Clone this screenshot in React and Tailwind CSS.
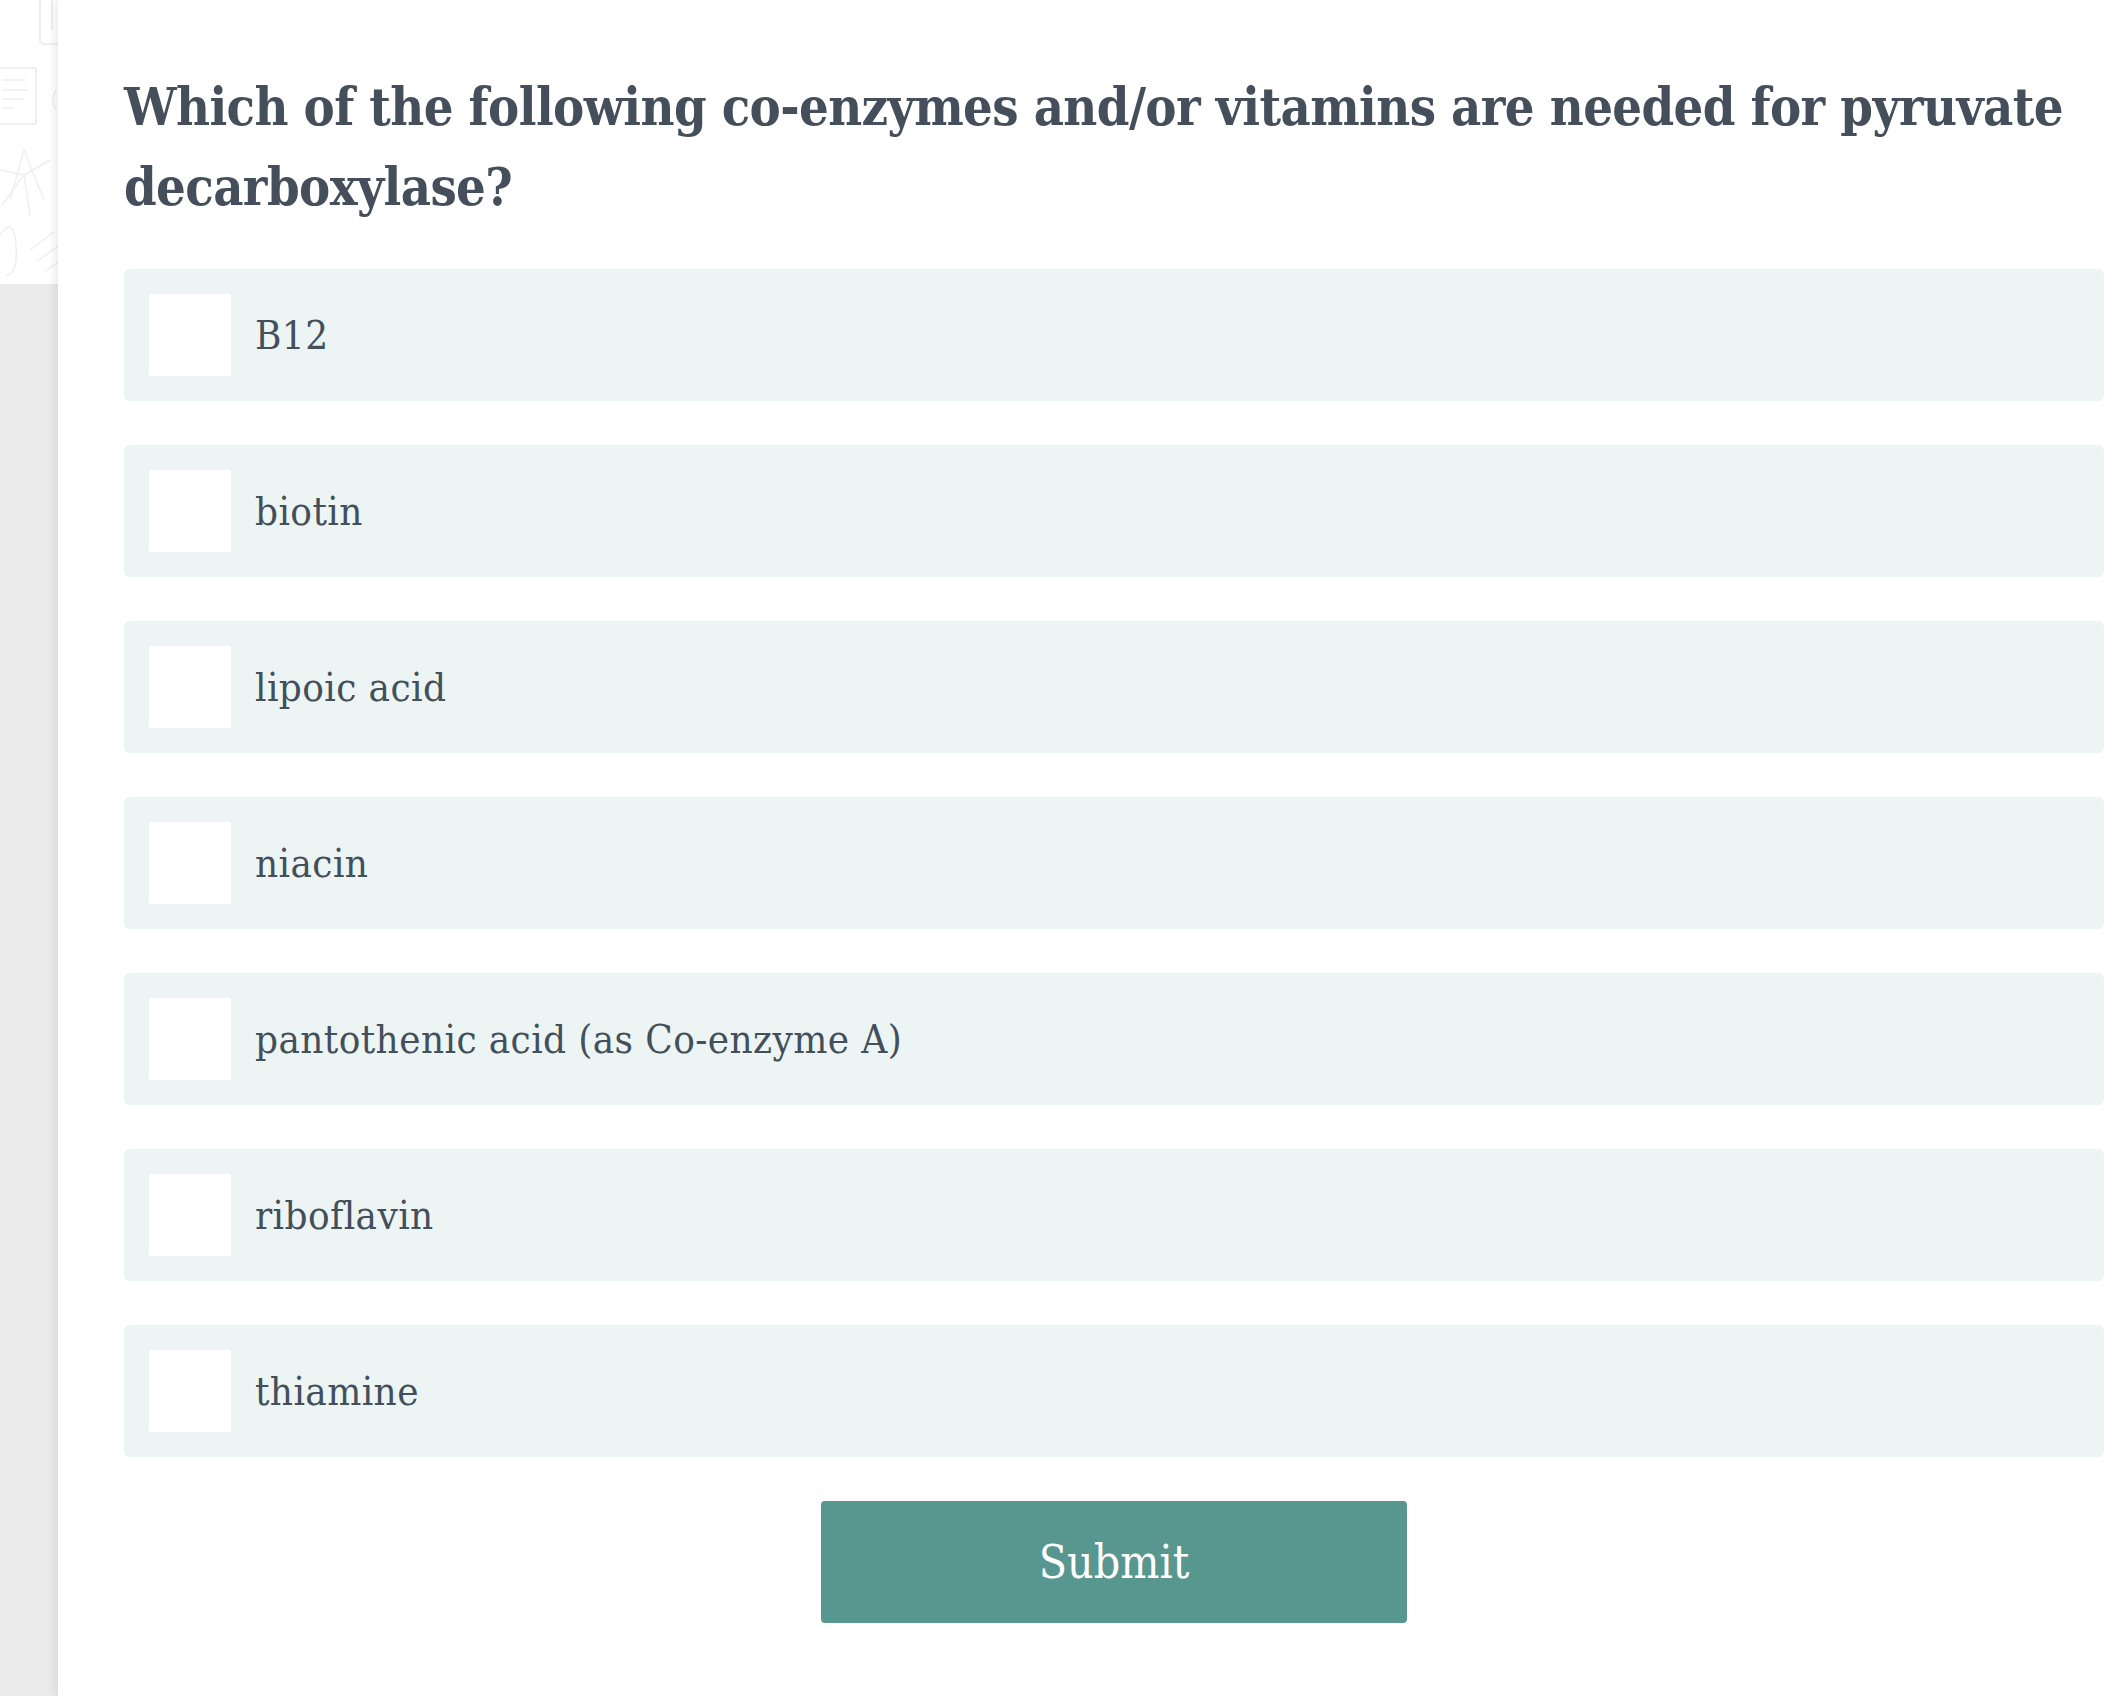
import React from "react";

const options = [
  "B12",
  "biotin",
  "lipoic acid",
  "niacin",
  "pantothenic acid (as Co-enzyme A)",
  "riboflavin",
  "thiamine",
];

// faint line doodles in the top of the side strip
function Doodle() {
  return (
    <svg width="58" height="284" viewBox="0 0 58 284" fill="none" stroke="#efefef" strokeWidth="2">
      <path d="M40 0 V40 a4 4 0 0 0 4 4 H58" />
      <path d="M52 0 V30" />
      <rect x="-6" y="68" width="42" height="56" rx="2" />
      <path d="M2 80 H26 M2 90 H28 M2 99 H24 M2 108 H14" strokeWidth="1.5" />
      <path d="M24 150 L10 200 M24 150 L44 200 M24 175 L0 170 M24 175 L50 160 M24 175 L30 215 M24 175 L2 205" strokeWidth="1.5" />
      <path d="M0 235 q14 -20 16 10 t-10 30" strokeWidth="1.5" />
      <path d="M30 250 l24 -18 M36 262 l22 -16 M44 272 l14 -10" strokeWidth="1.5" />
      <path d="M56 90 q-6 10 0 20" strokeWidth="1.5" />
    </svg>
  );
}

function OptionRow({ label }) {
  return (
    <label className="flex items-center h-[132px] p-6 bg-[#edf5f4] rounded-md cursor-pointer">
      <span className="w-[84px] h-[84px] shrink-0 bg-white rounded-[3px] border border-[#f1f3f3]" />
      <span className="ml-[23px] text-[40px] leading-none tracking-[0.4px] text-[#434f5b]">{label}</span>
    </label>
  );
}

export default function App() {
  return (
    <div
      className="flex h-[1696px] overflow-hidden bg-white font-stretch-condensed"
      style={{ fontFamily: '"DejaVu Serif", "Liberation Serif", serif' }}
    >
      <aside className="w-[58px] shrink-0 flex flex-col">
        <div className="h-[284px] bg-white">
          <Doodle />
        </div>
        <div className="flex-1 bg-[#ebebeb]" />
      </aside>

      <main className="relative z-10 flex-1 bg-white pl-[66px] pr-6 pt-[67px] shadow-[-4px_0_8px_rgba(0,0,0,0.07)]">
        <h1 className="text-[52px] leading-[80px] font-bold tracking-[-0.6px] text-[#454f5b]">
          Which of the following co-enzymes and/or vitamins are needed for pyruvate decarboxylase?
        </h1>

        <div className="mt-[42px] flex flex-col gap-[44px]">
          {options.map(o => (
            <OptionRow key={o} label={o} />
          ))}
        </div>

        <button className="mt-[44px] ml-[697px] w-[586px] h-[122px] bg-[#589690] rounded-[4px] text-white text-[46px]">
          Submit
        </button>
      </main>
    </div>
  );
}
